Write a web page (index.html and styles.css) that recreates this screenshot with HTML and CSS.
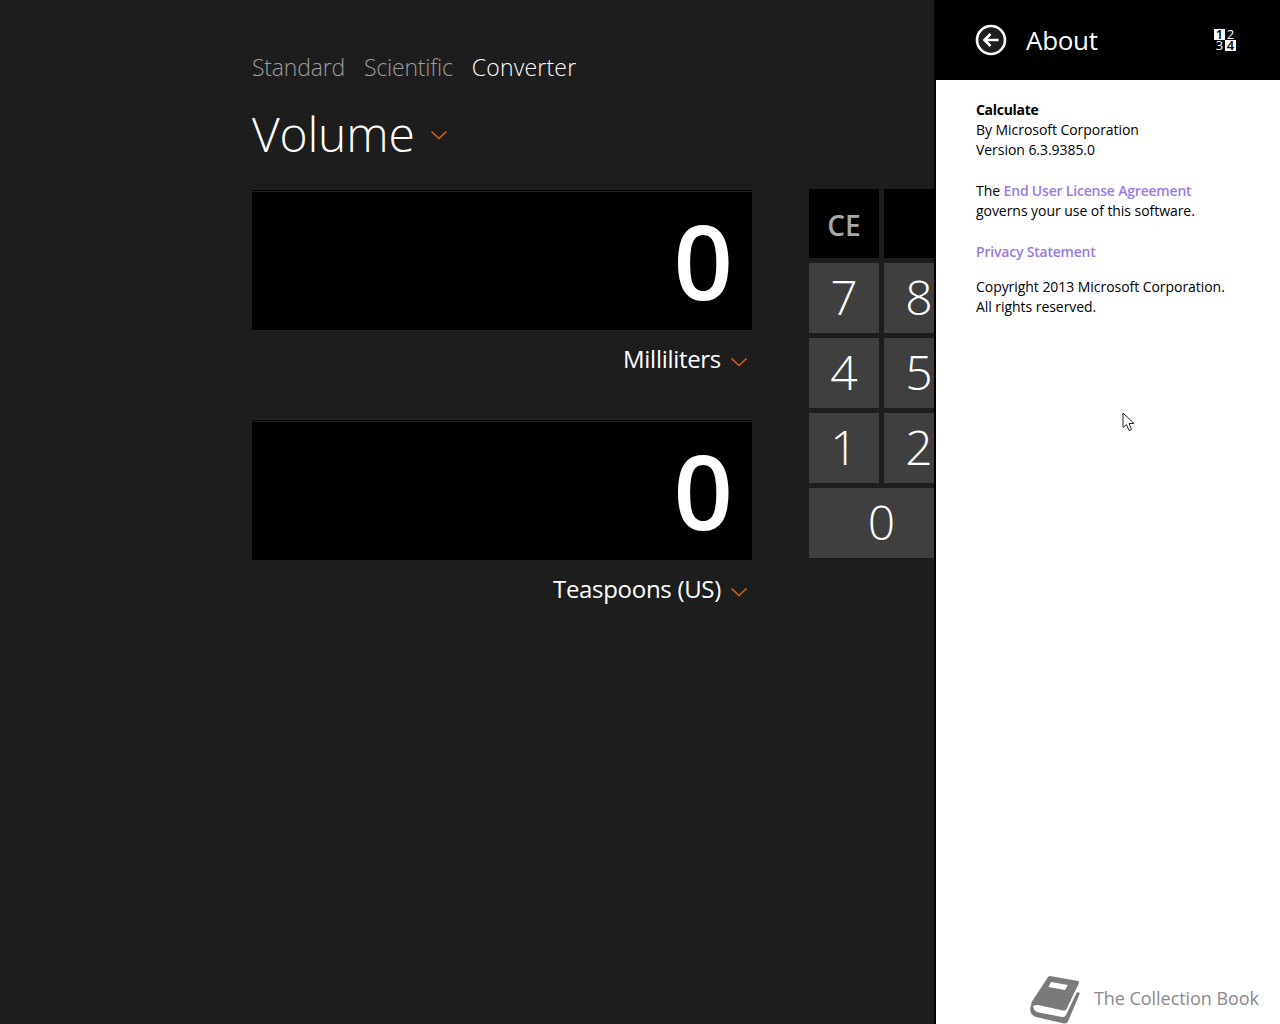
FILE: index.html
```html
<!DOCTYPE html>
<html>
	<head>
		<meta charset="UTF-8">
		<title>Calculator</title>
		<link rel="stylesheet" href="styles.css">
	</head>
	<body>
		<div class="app">
			<div class="main">
				<div class="tabs">
					<div class="tab">Standard</div>
					<div class="tab">Scientific</div>
					<div class="tab on">Converter</div>
				</div>
				<div class="kind">
					<span>Volume</span>
					<svg class="chev" width="18" height="10" viewBox="0 0 18 10"><path d="M1.5 1.5 L9 8.5 L16.5 1.5" /></svg>
				</div>
				<div class="work">
					<div class="conv">
						<div class="display">0</div>
						<div class="unit">
							<span>Milliliters</span>
							<svg class="chev" width="18" height="10" viewBox="0 0 18 10"><path d="M1.5 1.5 L9 8.5 L16.5 1.5" /></svg>
						</div>
						<div class="display second">0</div>
						<div class="unit">
							<span>Teaspoons (US)</span>
							<svg class="chev" width="18" height="10" viewBox="0 0 18 10"><path d="M1.5 1.5 L9 8.5 L16.5 1.5" /></svg>
						</div>
					</div>
					<div class="keys">
						<div class="key top">CE</div>
						<div class="key top"></div>
						<div class="key">7</div>
						<div class="key">8</div>
						<div class="key">4</div>
						<div class="key">5</div>
						<div class="key">1</div>
						<div class="key">2</div>
						<div class="key zero">0</div>
					</div>
				</div>
			</div>
			<div class="flyout">
				<div class="fly-head">
					<svg class="back" width="32" height="32" viewBox="0 0 32 32">
						<circle cx="16" cy="16" r="14" />
						<path d="M23.5 16 H10 M15.5 10 L9.5 16 L15.5 22" />
					</svg>
					<div class="fly-title">About</div>
					<div class="logo">
						<span class="inv">1</span><span>2</span><span>3</span><span class="inv">4</span>
					</div>
				</div>
				<div class="fly-body">
					<p><b>Calculate</b><br>By Microsoft Corporation<br>Version 6.3.9385.0</p>
					<p>The <a>End User License Agreement</a><br>governs your use of this software.</p>
					<p><a>Privacy Statement</a></p>
					<p class="copy">Copyright 2013 Microsoft Corporation.<br>All rights reserved.</p>
				</div>
				<div class="mark">
					<svg width="62" height="52" viewBox="0 0 62 52">
						<path class="book" d="M26 4 L54 9 Q55.5 9.5 55 11 L42.5 37 Q41.5 39 39 38.5 L14 33 Q10 32.5 8.5 35 Q6 33 8 29.5 L24 5 Q25 4 26 4 Z" />
						<path class="book" d="M7 33 Q4 42 12 45 L40 51.5 Q43 52 44 49.5 L56 21 L53 20 L42 43 Q41 45.5 38 45 L15 40.5 Q9 39 10 36 L8 34 Z" />
						<path class="slot" d="M27 10 L44 13 L41 18 L24.500 15 Z" />
					</svg>
					<span>The Collection Book</span>
				</div>
				<svg class="cursor" width="14" height="20" viewBox="0 0 14 20">
					<path d="M1 1 V15.5 L4.5 12.5 L7 18.5 L9.5 17.5 L7 11.5 L12 11.5 Z" />
				</svg>
			</div>
		</div>
	</body>
</html>
```

FILE: styles.css
```css
* {
	margin: 0;
	padding: 0;
	box-sizing: border-box;
}

body {
	background-color: #1d1d1d;
	font-family: "Open Sans", "Noto Sans", sans-serif;
	color: #fff;
	overflow: hidden;
}

.app {
	display: flex;
	width: 1280px;
	height: 1024px;
}

.main {
	width: 934px;
	padding: 50px 0 0 252px;
	overflow: hidden;
	flex-shrink: 0;
}

.tabs {
	display: flex;
	gap: 19px;
	height: 34px;
	font-size: 23px;
	font-weight: 300;
	line-height: 34px;
	letter-spacing: -0.2px;
}

.tab {
	color: #9c9c9c;
}

.tab.on {
	color: #fff;
	letter-spacing: 0.2px;
}

.kind {
	display: flex;
	align-items: center;
	gap: 15px;
	height: 70px;
	margin-top: 16px;
	font-size: 48px;
	font-weight: 300;
	letter-spacing: -0.2px;
}

.kind span {
	margin-top: -4px;
}

.chev {
	fill: none;
	stroke: #d2601a;
	stroke-width: 1.6;
}

.work {
	display: flex;
	gap: 57px;
	margin-top: 20px;
}

.conv {
	width: 500px;
	flex-shrink: 0;
}

.display {
	height: 140px;
	padding-right: 19px;
	background-color: #000;
	border-top: 1px solid #000;
	box-shadow: inset 0 1px 0 #1d1d1d;
	font-size: 104px;
	font-weight: 600;
	line-height: 138px;
	text-align: right;
}

.display.second {
	margin-top: 30px;
}

.unit {
	display: flex;
	justify-content: flex-end;
	align-items: center;
	gap: 9px;
	height: 60px;
	padding-right: 4px;
	font-size: 24px;
	letter-spacing: -0.3px;
}

.unit span {
	margin-top: -3px;
}

.unit .chev {
	margin-top: 4px;
}

.keys {
	display: grid;
	grid-template-columns: 70px 70px;
	grid-template-rows: 69px 70px 70px 70px 70px;
	gap: 5px;
	margin-top: -1px;
}

.key {
	background-color: #3f3f3f;
	font-size: 48px;
	font-weight: 300;
	line-height: 68px;
	text-align: center;
}

.key.top {
	background-color: #000;
	color: #a8a8a8;
	font-size: 28px;
	font-weight: 600;
	line-height: 72px;
}

.key.zero {
	grid-column: span 2;
	width: 145px;
}

.flyout {
	position: relative;
	flex: 1;
	border-left: 2px solid #000;
	background-color: #fff;
	color: #000;
}

.fly-head {
	display: flex;
	align-items: center;
	height: 80px;
	padding-left: 39px;
	background-color: #000;
	color: #fff;
}

.back {
	fill: #1d1d1d;
	stroke: #fff;
	stroke-width: 2.6;
}

.fly-title {
	width: 188px;
	margin-left: 19px;
	font-size: 26px;
	letter-spacing: -0.3px;
}

.logo {
	display: grid;
	grid-template-columns: 11px 11px;
	grid-auto-rows: 11px;
	font-size: 13px;
	line-height: 11px;
	text-align: center;
}

.logo .inv {
	background-color: #fff;
	color: #000;
	font-weight: 600;
}

.fly-body {
	padding: 20px 0 0 40px;
	font-size: 14px;
	line-height: 20px;
	letter-spacing: -0.05px;
}

.fly-body p {
	margin-bottom: 21px;
}

.fly-body p.copy {
	margin-top: -6px;
}

.fly-body b {
	font-weight: 700;
	letter-spacing: -0.3px;
}

.fly-body a {
	color: #9a7be0;
	font-weight: 600;
	letter-spacing: -0.2px;
}

.mark {
	position: absolute;
	right: 21px;
	bottom: 0;
	display: flex;
	align-items: center;
	gap: 8px;
	height: 52px;
	color: #8a8a8a;
	font-size: 18px;
	letter-spacing: -0.05px;
}

.book {
	fill: #7a7a7a;
}

.slot {
	fill: #fff;
}

.cursor {
	position: absolute;
	left: 186px;
	top: 412px;
	fill: #fff;
	stroke: #222;
	stroke-width: 1;
}
```
